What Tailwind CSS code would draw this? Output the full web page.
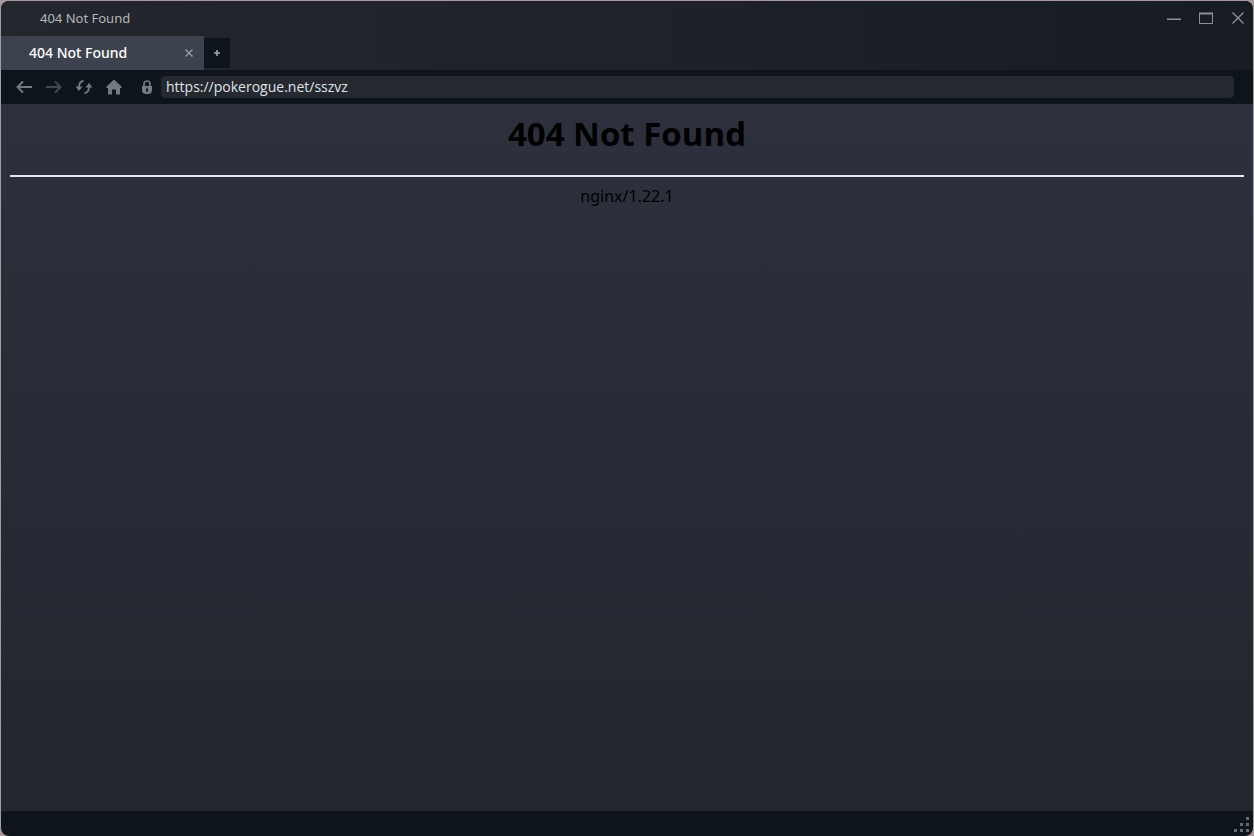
<!DOCTYPE html>
<html lang="en">
<head>
    <meta charset="UTF-8">
    <meta name="viewport" content="width=device-width, initial-scale=1.0">
    <title>404 Not Found</title>
    <script src="https://cdn.jsdelivr.net/npm/@tailwindcss/browser@4"></script>
</head>
<body class="bg-[#a89a9c] font-['Noto_Sans',sans-serif]">
    <div class="min-h-screen flex flex-col pt-px px-px">
        <div class="grow flex flex-col rounded-lg overflow-hidden bg-[#0e141b]">
            <!-- title bar and tabs -->
            <header class="bg-linear-to-r from-[#24262e] via-[#1f2229] to-[#171b22]">
                <div class="h-[35px] flex items-center justify-between pl-[39px] pr-[7px]">
                    <span class="text-[13px] text-[#b4b6ba]">404 Not Found</span>
                    <div class="flex gap-4 pb-0.5 text-[#8b9299]">
                        <button aria-label="Minimize" class="size-4">
                            <svg viewBox="0 0 16 16" fill="none" stroke="currentColor" stroke-width="1.6"><path d="M1 9.2h14"/></svg>
                        </button>
                        <button aria-label="Maximize" class="size-4">
                            <svg viewBox="0 0 16 16" fill="none" stroke="currentColor"><path d="M1.5 3.5h13v10h-13z"/><path d="M1 3.5h14" stroke-width="2"/></svg>
                        </button>
                        <button aria-label="Close" class="size-4">
                            <svg viewBox="0 0 16 16" fill="none" stroke="currentColor" stroke-width="1.4"><path d="M2.5 2.5l11 11M13.5 2.5l-11 11"/></svg>
                        </button>
                    </div>
                </div>
                <div class="h-[34px] flex items-center">
                    <div class="h-full w-[203px] flex items-center justify-between pl-7 pr-2.5 bg-[#3d434e]">
                        <span class="text-sm font-medium text-white">404 Not Found</span>
                        <button aria-label="Close tab" class="size-2.5 text-[#9a9fa3]">
                            <svg viewBox="0 0 10 10" fill="none" stroke="currentColor" stroke-width="1.4"><path d="M1.5 1.5l7 7M8.5 1.5l-7 7"/></svg>
                        </button>
                    </div>
                    <button aria-label="New tab" class="h-[30px] w-[26px] flex items-center justify-center bg-[#0e141b] text-[#a4a9ad]">
                        <svg class="size-2" viewBox="0 0 8 8" fill="none" stroke="currentColor" stroke-width="1.5"><path d="M4 1v6M1 4h6"/></svg>
                    </button>
                </div>
            </header>

            <!-- address bar -->
            <nav class="h-[34px] flex items-center pl-[15px] pr-[19px] text-[#737a84]">
                <div class="flex gap-3.5">
                    <button aria-label="Back" class="size-4">
                        <svg viewBox="0 0 16 16" fill="none" stroke="currentColor" stroke-width="2"><path d="M16 8H2M7 2.5L1.5 8 7 13.5"/></svg>
                    </button>
                    <button aria-label="Forward" class="size-4 text-[#434951]">
                        <svg viewBox="0 0 16 16" fill="none" stroke="currentColor" stroke-width="2"><path d="M0 8h14M9 2.5L14.5 8 9 13.5"/></svg>
                    </button>
                    <button aria-label="Reload" class="size-4">
                        <svg class="overflow-visible" viewBox="0 0 16 16" fill="none" stroke="currentColor" stroke-width="1.8"><path d="M7.5 2C4.5 2.2 3 4.5 3 8.5M8.5 14c3-.2 4.500-2.500 4.500-6.500"/><path d="M-.5 7.500h7L3 12zM9.500 8.500h7L13 4z" fill="currentColor" stroke="none"/></svg>
                    </button>
                    <button aria-label="Home" class="size-4">
                        <svg viewBox="0 0 16 16" fill="currentColor"><path d="M8 .5L.5 7.500V9H2v6.500h4v-5h4v5h4V9h1.500V7.500z"/></svg>
                    </button>
                </div>
                <svg class="ml-[17px] mr-1.5 size-4" viewBox="0 0 16 16"><path d="M5 8V5a3 3 0 0 1 6 0v3" fill="none" stroke="currentColor" stroke-width="1.7"/><path fill="currentColor" fill-rule="evenodd" d="M3 7h10v4a4 4 0 0 1-4 4H7a4 4 0 0 1-4-4zM7 9.500v3h2v-3z"/></svg>
                <input type="text" aria-label="Address" value="https://pokerogue.net/sszvz" class="grow min-w-0 h-[22px] pb-0.5 px-[5px] rounded-sm bg-[#25292f] font-['Open_Sans',sans-serif] text-sm text-[#dfe3e6] outline-none">
            </nav>

            <main class="grow bg-linear-to-b from-[#2c313d] via-[#262b35] to-[#23262f] px-[9px] pt-2 text-center text-black">
                <h1 class="font-['Open_Sans',sans-serif] text-[33px] leading-[44px] font-bold">404 Not Found</h1>
                <hr class="mt-[19px] mb-[7px] border-t-2 border-[#e6e7ea]">
                <p class="text-base">nginx/1.22.1</p>
            </main>

            <!-- status bar with the resize grip -->
            <footer class="h-[25px] flex items-end justify-end pr-1 pb-1">
                <svg class="size-[15px]" viewBox="0 0 15 15" fill="#666b71"><path d="M12 0h3v3h-3zM6 6h3v3H6zM12 6h3v3h-3zM0 12h3v3H0zM6 12h3v3H6zM12 12h3v3h-3z"/></svg>
            </footer>
        </div>
    </div>
</body>
</html>
